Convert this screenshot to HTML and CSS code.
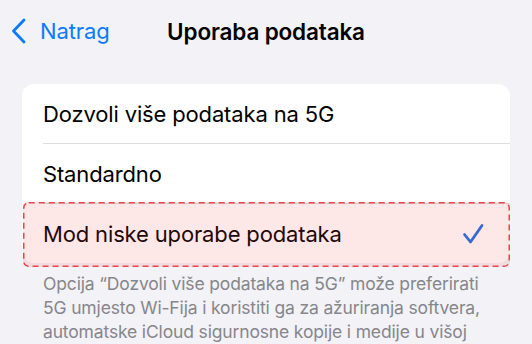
FILE: index.html
```html
<!DOCTYPE html>
<html lang="hr">
<head>
<meta charset="utf-8">
<title>Uporaba podataka</title>
<link rel="stylesheet" href="styles.css">
</head>
<body>
<div class="screen">
  <header class="navbar">
    <a class="back" href="#">
      <svg class="chev" width="18" height="26" viewBox="0 0 18 26"><path d="M14 2 L3.5 13 L14 24" fill="none" stroke="#0a7aff" stroke-width="2.8" stroke-linecap="round" stroke-linejoin="round"/></svg>
      <span>Natrag</span>
    </a>
    <h1 class="title">Uporaba podataka</h1>
  </header>

  <section class="group">
    <div class="row"><span class="label">Dozvoli više podataka na 5G</span></div>
    <div class="sep"></div>
    <div class="row"><span class="label">Standardno</span></div>
    <div class="sep"></div>
    <div class="row selected">
      <span class="label">Mod niske uporabe podataka</span>
      <svg class="check" width="22" height="22" viewBox="0 0 22 22"><path d="M2.5 11.5 L8.5 19 L20 2.5" fill="none" stroke="#1a6fe8" stroke-width="2.8" stroke-linecap="round" stroke-linejoin="round"/></svg>
      <div class="highlight">
        <svg class="dash" width="100%" height="100%"><rect x="0.75" y="0.75" width="calc(100% - 1.5px)" height="calc(100% - 1.5px)" rx="5" ry="5" fill="none" stroke="#e8474a" stroke-width="1.5" stroke-dasharray="6 4"/></svg>
      </div>
    </div>
  </section>

  <p class="footer">Opcija “Dozvoli više podataka na 5G” može preferirati 5G umjesto Wi-Fija i koristiti ga za ažuriranja softvera, automatske iCloud sigurnosne kopije i medije u višoj kvaliteti.</p>
</div>
</body>
</html>
```

FILE: styles.css
```css
* { box-sizing: border-box; }
html, body { margin: 0; padding: 0; }
body {
  background: #f2f2f7;
  font-family: Inter, "Noto Sans", "Liberation Sans", sans-serif;
  color: #000;
  overflow: hidden;
  width: 532px;
  height: 344px;
}
.screen { display: flex; flex-direction: column; }
.navbar {
  height: 62px;
  display: flex;
  align-items: center;
  justify-content: center;
  position: relative;
}
.back {
  position: absolute;
  left: 10px;
  top: 18px;
  display: flex;
  align-items: center;
  gap: 12px;
  color: #0a7aff;
  text-decoration: none;
  font-size: 22px;
  letter-spacing: -0.1px;
}
.chev { display: block; }
.title {
  margin: 0;
  font-size: 22.5px;
  font-weight: 600;
  letter-spacing: -0.15px;
  margin-top: 0;
}
.group {
  margin: 22px 22px 0 22px;
  background: #fff;
  border-radius: 12px;
  display: flex;
  flex-direction: column;
}
.row {
  height: 59px;
  display: flex;
  align-items: center;
  padding: 0 26px 0 21px;
  font-size: 22px;
  letter-spacing: -0.15px;
  position: relative;
}
.sep {
  height: 1px;
  background: #dedee2;
  margin-left: 21px;
}
.label { flex: 1; }
.check { display: block; }
.highlight {
  position: absolute;
  left: 1px;
  right: 0;
  top: -2px;
  bottom: -4px;
  background: rgba(246, 70, 70, 0.13);
  border-radius: 5px;
}
.dash { display: block; }
.footer {
  margin: 0;
  padding: 9px 30px 0 43px;
  font-size: 17.5px;
  line-height: 24px;
  color: #86868b;
  letter-spacing: -0.15px;
}
```
